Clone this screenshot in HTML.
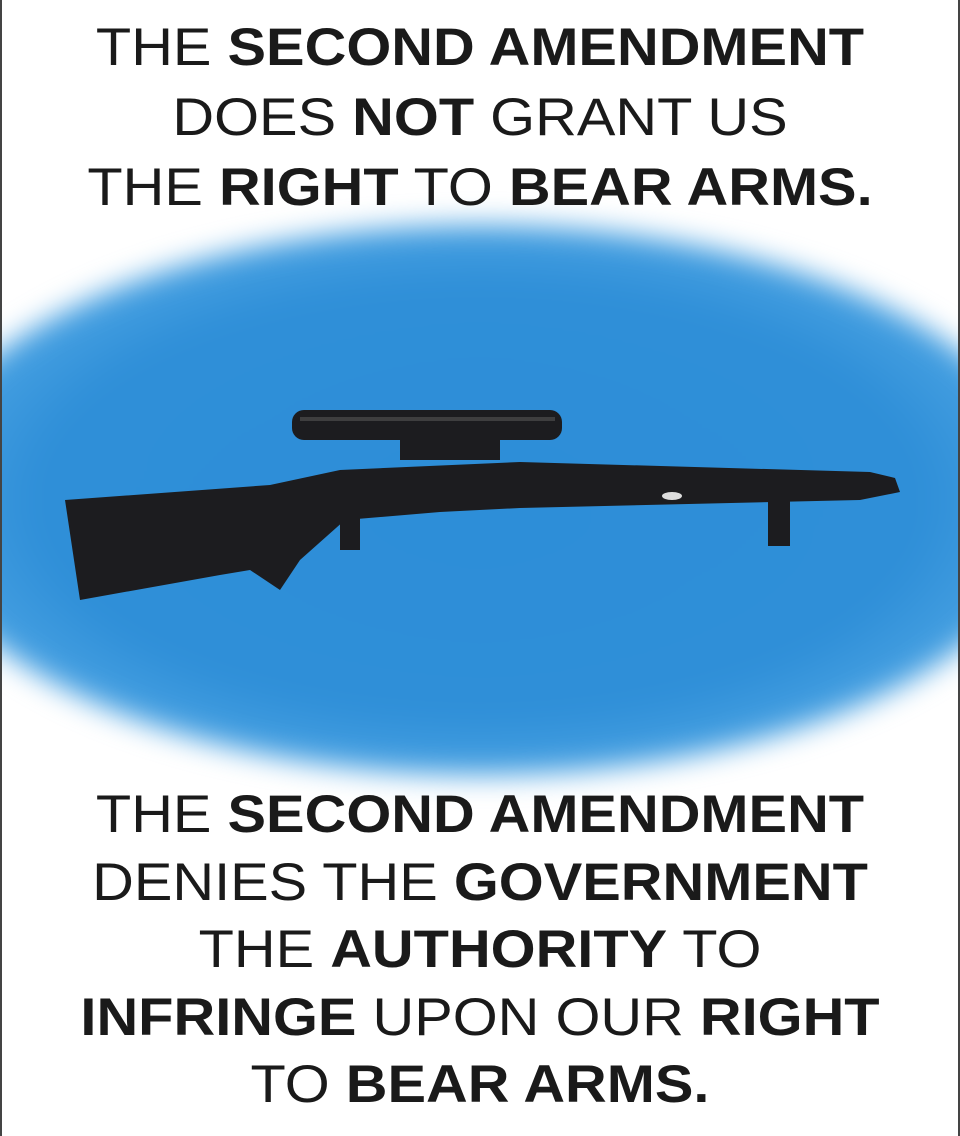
<!DOCTYPE html>
<html><head><meta charset="utf-8"><style>
html,body{margin:0;padding:0}
body{width:960px;height:1136px;position:relative;background:#fff;overflow:hidden;font-family:"Liberation Sans",sans-serif;color:#1a1a1a}
.edge{position:absolute;top:0;bottom:0;width:2px;background:#444}
.t{position:absolute;left:0;width:960px;text-align:center;font-size:53px;line-height:60px;white-space:nowrap;transform:scaleX(1.09);transform-origin:480px 0}
b{font-weight:bold}
.blob{position:absolute;left:-90px;top:225px;width:1140px;height:550px;border-radius:50%;background:radial-gradient(ellipse at center,#2d8ed8 0%,#2f8fd8 55%,#4aa3e3 72%,#9ccdf2 86%,rgba(255,255,255,0) 100%);filter:blur(14px)}
</style></head><body>
<div class="blob"></div>
<div class="edge" style="left:0"></div><div class="edge" style="right:0"></div>
<div class="t" style="top:18px">THE <b>SECOND AMENDMENT</b></div>
<div class="t" style="top:88px">DOES <b>NOT</b> GRANT US</div>
<div class="t" style="top:158px">THE <b>RIGHT</b> TO <b>BEAR ARMS.</b></div>
<svg style="position:absolute;left:0;top:0" width="960" height="1136">
<g fill="#1c1c1f">
<rect x="292" y="410" width="270" height="30" rx="12"/>
<rect x="400" y="430" width="100" height="30"/>
<path d="M65 500 L270 485 L340 470 L520 462 L870 472 L895 478 L900 492 L860 500 L520 508 L440 512 L345 520 L300 560 L280 590 L250 570 L220 575 L80 600 Z"/>
<rect x="768" y="498" width="22" height="48"/>
<rect x="340" y="505" width="20" height="45"/>
</g>
<rect x="300" y="417" width="255" height="4" fill="#555" opacity=".6"/>
<ellipse cx="672" cy="496" rx="10" ry="4" fill="#ddd"/>
</svg>
<div class="t" style="top:785px">THE <b>SECOND AMENDMENT</b></div>
<div class="t" style="top:853px">DENIES THE <b>GOVERNMENT</b></div>
<div class="t" style="top:920px">THE <b>AUTHORITY</b> TO</div>
<div class="t" style="top:988px"><b>INFRINGE</b> UPON OUR <b>RIGHT</b></div>
<div class="t" style="top:1055px">TO <b>BEAR ARMS.</b></div>
</body></html>
